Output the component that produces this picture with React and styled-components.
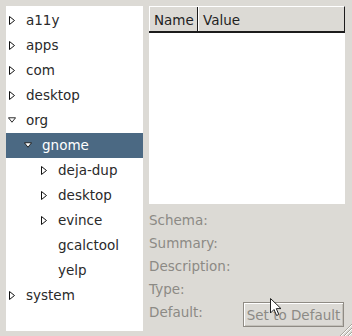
import React from 'react';
import styled, { createGlobalStyle } from 'styled-components';

const GlobalStyle = createGlobalStyle`
  html, body {
    margin: 0;
    padding: 0;
    background: #dcdad5;
  }
  body {
    font-family: "DejaVu Sans", "Liberation Sans", sans-serif;
    font-size: 13px;
  }
`;

const tree = [
  { label: 'a11y', level: 0, state: 'closed' },
  { label: 'apps', level: 0, state: 'closed' },
  { label: 'com', level: 0, state: 'closed' },
  { label: 'desktop', level: 0, state: 'closed' },
  { label: 'org', level: 0, state: 'open' },
  { label: 'gnome', level: 1, state: 'open', selected: true },
  { label: 'deja-dup', level: 2, state: 'closed' },
  { label: 'desktop', level: 2, state: 'closed' },
  { label: 'evince', level: 2, state: 'closed' },
  { label: 'gcalctool', level: 2, state: 'leaf' },
  { label: 'yelp', level: 2, state: 'leaf' },
  { label: 'system', level: 0, state: 'closed' },
];

const details = ['Schema:', 'Summary:', 'Description:', 'Type:'];

const Expander = ({ state }) => {
  if (state === 'leaf') return <ExpanderBox />;
  if (state === 'open') {
    return (
      <ExpanderBox>
        <svg width="9" height="6" viewBox="0 0 9 6">
          <path d="M0.5 0.5 L8.5 0.5 L4.5 5.5 Z" fill="#fff" stroke="#111" strokeWidth="1" />
        </svg>
      </ExpanderBox>
    );
  }
  return (
    <ExpanderBox>
      <svg width="6" height="9" viewBox="0 0 6 9">
        <path d="M0.5 0.5 L5.5 4.5 L0.5 8.5 Z" fill="#fff" stroke="#111" strokeWidth="1" />
      </svg>
    </ExpanderBox>
  );
};

const App = () => (
  <>
    <GlobalStyle />
    <Window>
      <TreePane>
        {tree.map((item, i) => (
          <TreeRow key={i} $level={item.level} $selected={item.selected}>
            <Expander state={item.state} />
            <span>{item.label}</span>
          </TreeRow>
        ))}
      </TreePane>
      <RightPane>
        <Table>
          <Header>
            <HeaderCell $width={49}>Name</HeaderCell>
            <HeaderCell $grow>Value</HeaderCell>
          </Header>
          <TableBody />
        </Table>
        <Details>
          {details.map((d) => (
            <DetailRow key={d}>{d}</DetailRow>
          ))}
          <DefaultRow>
            <DetailRow>Default:</DetailRow>
            <Button disabled>Set to Default</Button>
          </DefaultRow>
        </Details>
      </RightPane>
      <Cursor width="12" height="19" viewBox="0 0 12 19">
        <path
          d="M0.5 0.5 L0.5 15 L4 11.5 L6.6 17.5 L8.8 16.5 L6.3 10.6 L11 10.6 Z"
          fill="#fff"
          stroke="#222"
          strokeWidth="1"
          strokeLinejoin="round"
        />
      </Cursor>
      <Grip width="16" height="16" viewBox="0 0 16 16">
        <g strokeWidth="1">
          <line x1="4" y1="16" x2="16" y2="4" stroke="#a9a59c" />
          <line x1="5" y1="16" x2="16" y2="5" stroke="#fff" />
          <line x1="8" y1="16" x2="16" y2="8" stroke="#a9a59c" />
          <line x1="9" y1="16" x2="16" y2="9" stroke="#fff" />
          <line x1="12" y1="16" x2="16" y2="12" stroke="#a9a59c" />
          <line x1="13" y1="16" x2="16" y2="13" stroke="#fff" />
        </g>
      </Grip>
    </Window>
  </>
);

const Window = styled.div`
  position: relative;
  width: 352px;
  height: 336px;
  box-sizing: border-box;
  padding: 6px 7px 5px 6px;
  display: flex;
  gap: 6px;
  background: #dcdad5;
  overflow: hidden;
`;

const TreePane = styled.div`
  width: 137px;
  background: #ffffff;
  padding-top: 1.5px;
  box-sizing: border-box;
`;

const TreeRow = styled.div`
  height: 25px;
  display: flex;
  align-items: center;
  padding-left: ${(p) => p.$level * 16 + 2}px;
  background: ${(p) => (p.$selected ? '#4b6983' : 'transparent')};
  color: ${(p) => (p.$selected ? '#ffffff' : '#2a2a2a')};
  white-space: nowrap;
  font-size: 13.5px;
`;

const ExpanderBox = styled.span`
  width: 8px;
  margin-right: 10px;
  display: flex;
  align-items: center;
  justify-content: center;
`;

const RightPane = styled.div`
  width: 196px;
  display: flex;
  flex-direction: column;
`;

const Table = styled.div`
  height: 198px;
  display: flex;
  flex-direction: column;
  background: #ffffff;
`;

const Header = styled.div`
  height: 27px;
  display: flex;
  background: #dcdad5;
  border-top: 1px solid #ffffff;
  border-bottom: 2px solid #1c1c1c;
  border-right: 1px solid #1c1c1c;
  box-sizing: border-box;
`;

const HeaderCell = styled.div`
  ${(p) => (p.$grow ? 'flex: 1;' : `width: ${p.$width}px; flex: none;`)}
  box-sizing: border-box;
  display: flex;
  align-items: center;
  padding: 1px 0 0 4px;
  color: #1f1f1f;
  font-size: 13.5px;
  border-left: 1px solid #ffffff;
  border-right: ${(p) => (p.$grow ? 'none' : '1px solid #1c1c1c')};
`;

const TableBody = styled.div`
  flex: 1;
  margin-right: 1px;
  background: #ffffff;
`;

const Details = styled.div`
  padding-top: 5px;
  display: flex;
  flex-direction: column;
`;

const DetailRow = styled.div`
  height: 23px;
  line-height: 23px;
  color: #8c8a85;
  font-size: 13.5px;
`;

const DefaultRow = styled.div`
  display: flex;
  justify-content: space-between;
  align-items: flex-start;
`;

const Button = styled.button`
  margin-top: 1px;
  margin-right: 1px;
  width: 101px;
  height: 25px;
  padding: 0;
  font-family: inherit;
  font-size: 13.5px;
  color: #8c8a85;
  background: #dcdad5;
  border: 1px solid #8f8b84;
  box-shadow: inset 1px 1px 0 #ffffff, inset -1px -1px 0 #c4c1ba;
`;

const Cursor = styled.svg`
  position: absolute;
  left: 270px;
  top: 298px;
`;

const Grip = styled.svg`
  position: absolute;
  right: 0;
  bottom: 0;
`;

export default App;
